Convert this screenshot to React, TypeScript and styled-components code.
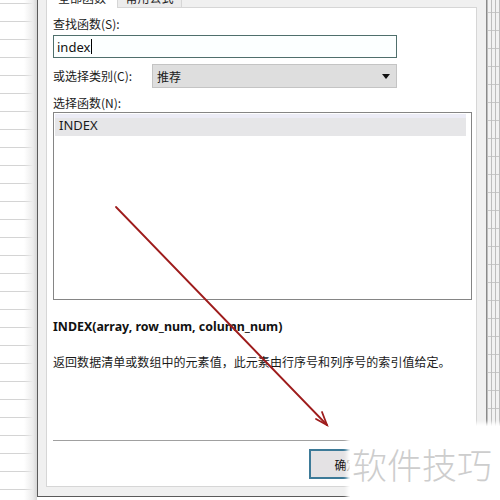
import React from "react";
import styled, { createGlobalStyle } from "styled-components";

const Global = createGlobalStyle`
  html, body { margin: 0; padding: 0; background: #fff; }
  body { font-family: "Noto Sans CJK SC", "Noto Sans", sans-serif; }
`;

const Screen = styled.div`
  position: relative;
  width: 500px;
  height: 500px;
  overflow: hidden;
  display: flex;
  background: #fff;
`;

const LeftSheet = styled.div`
  width: 37px;
  flex: none;
  background:
    linear-gradient(to right, rgba(255,255,255,0) 0, rgba(255,255,255,0) 24px, #ececec 33px, #d6d6d6 37px),
    repeating-linear-gradient(to bottom, #fff 0, #fff 3px, #d4d4d4 3px, #d4d4d4 4px, #fff 4px, #fff 18px);
`;

const RightSheet = styled.div`
  flex: 1;
  background:
    repeating-linear-gradient(to right, #bdbdbd 0, #bdbdbd 1px, transparent 1px, transparent 4px),
    repeating-linear-gradient(to bottom, #f2f2f2 0, #f2f2f2 12px, #c8c8c8 12px, #c8c8c8 13px, #f2f2f2 13px, #f2f2f2 18px);
`;

const Dialog = styled.div`
  width: 450px;
  flex: none;
  height: 511px;
  margin-top: -14px;
  box-sizing: border-box;
  background: #f0f0f0;
  border-left: 1px solid #5a5a5a;
  border-right: 1px solid #8a8a8a;
  border-bottom: 1px solid #5a5a5a;
  padding: 0 9px 9px 8px;
  display: flex;
  flex-direction: column;
`;

const TabBar = styled.div`
  display: flex;
  height: 22px;
  flex: none;
`;

const Tab = styled.div<{ $active?: boolean }>`
  box-sizing: border-box;
  width: ${(p) => (p.$active ? "72px" : "65px")};
  height: 22px;
  font-size: 12px;
  line-height: 22px;
  text-align: center;
  color: #222;
  background: ${(p) => (p.$active ? "#fff" : "#ececec")};
  border: 1px solid #d6d6d6;
  border-bottom: ${(p) => (p.$active ? "none" : "1px solid #d6d6d6")};
  margin-left: ${(p) => (p.$active ? "0" : "-1px")};
`;

const TabFill = styled.div`
  flex: 1;
  border-bottom: 1px solid #d6d6d6;
`;

const TabPage = styled.div`
  flex: 1;
  background: #fff;
  border: 1px solid #d6d6d6;
  border-top: none;
  padding: 8px 6px 0 6px;
  display: flex;
  flex-direction: column;
`;

const Label = styled.div<{ $mt?: number }>`
  font-size: 12px;
  line-height: 16px;
  color: #1a1a1a;
  margin-top: ${(p) => p.$mt ?? 0}px;
`;

const SearchInput = styled.div`
  margin-top: 3px;
  width: 344px;
  height: 23px;
  box-sizing: border-box;
  border: 1px solid #4f6f6c;
  background: #fcffff;
  font-family: "Noto Sans", sans-serif;
  font-size: 13px;
  line-height: 20px;
  padding-left: 3px;
  color: #111;
  display: flex;
  align-items: center;
`;

const Caret = styled.span`
  display: inline-block;
  width: 1px;
  height: 15px;
  background: #000;
  margin-left: 1px;
`;

const CategoryRow = styled.div`
  display: flex;
  align-items: center;
  margin-top: 6px;
  height: 24px;
`;

const CategoryLabel = styled(Label)`
  width: 99px;
`;

const Select = styled.div`
  width: 245px;
  height: 24px;
  box-sizing: border-box;
  border: 1px solid #c4c4c4;
  background: #dedede;
  display: flex;
  align-items: center;
  justify-content: space-between;
  padding: 0 6px 0 4px;
  font-size: 12px;
  color: #1a1a1a;
`;

const Arrow = styled.span`
  width: 0;
  height: 0;
  border-left: 4px solid transparent;
  border-right: 4px solid transparent;
  border-top: 5px solid #111;
`;

const ListBox = styled.div`
  margin-top: 1px;
  width: 419px;
  height: 188px;
  box-sizing: border-box;
  border: 1px solid #858585;
  padding: 1px 5px 0 1px;
  background: #fff;
`;

const ListItem = styled.div<{ $selected?: boolean }>`
  height: 22px;
  box-sizing: border-box;
  padding-left: 4px;
  font-family: "Noto Sans", sans-serif;
  font-size: 13px;
  line-height: 22px;
  color: #1a1a1a;
  background: ${(p) =>
    p.$selected
      ? "linear-gradient(to bottom, #ececf6 0, #ececf6 4px, #e6e6e8 4px, #e6e6e8 100%)"
      : "transparent"};
`;

const Signature = styled.div`
  margin-top: 18px;
  font-family: "Noto Sans", sans-serif;
  font-weight: 700;
  font-size: 12.4px;
  line-height: 18px;
  color: #111;
`;

const Description = styled.div`
  margin-top: 17px;
  font-size: 12px;
  letter-spacing: 0.05px;
  line-height: 18px;
  color: #1a1a1a;
`;

const Separator = styled.div`
  margin-top: 69px;
  height: 1px;
  background: #a0a0a0;
  box-shadow: 0 1px 0 #fff;
`;

const ButtonRow = styled.div`
  display: flex;
  gap: 8px;
  margin-top: 8px;
  padding-left: 256px;
`;

const Button = styled.div<{ $primary?: boolean }>`
  width: 75px;
  height: 30px;
  box-sizing: border-box;
  border: ${(p) => (p.$primary ? "2px solid #3d7a98" : "1px solid #adadad")};
  background: #e4e2e4;
  font-size: 12px;
  display: flex;
  align-items: center;
  justify-content: center;
  color: #111;
`;

const Overlay = styled.svg`
  position: absolute;
  left: 0;
  top: 0;
  pointer-events: none;
`;

const Watermark = styled.div`
  position: absolute;
  left: 350px;
  top: 426px;
  width: 150px;
  height: 74px;
  background: #fff;
  box-shadow: 0 0 4px 3px #fff;
  display: flex;
  align-items: center;
  padding-left: 2px;
  box-sizing: border-box;
  font-family: "Noto Sans CJK SC", sans-serif;
  font-weight: 300;
  font-size: 35px;
  color: #cdcdcd;
`;

export default function App() {
  return (
    <>
      <Global />
      <Screen>
        <LeftSheet />
        <Dialog>
          <TabBar>
            <Tab $active>全部函数</Tab>
            <Tab>常用公式</Tab>
            <TabFill />
          </TabBar>
          <TabPage>
            <Label>查找函数(S):</Label>
            <SearchInput>
              index
              <Caret />
            </SearchInput>
            <CategoryRow>
              <CategoryLabel>或选择类别(C):</CategoryLabel>
              <Select>
                <span>推荐</span>
                <Arrow />
              </Select>
            </CategoryRow>
            <Label $mt={7}>选择函数(N):</Label>
            <ListBox>
              <ListItem $selected>INDEX</ListItem>
            </ListBox>
            <Signature>INDEX(array, row_num, column_num)</Signature>
            <Description>
              返回数据清单或数组中的元素值，此元素由行序号和列序号的索引值给定。
            </Description>
            <Separator />
            <ButtonRow>
              <Button $primary>确定</Button>
            </ButtonRow>
          </TabPage>
        </Dialog>
        <RightSheet />
        <Overlay width="500" height="500" viewBox="0 0 500 500">
          <g stroke="#9e1c1c" strokeWidth="1.8" strokeLinecap="round" fill="none">
            <line x1="116" y1="207" x2="327" y2="425" />
            <polyline points="316,419 327,425 322,412" />
          </g>
        </Overlay>
        <Watermark>软件技巧</Watermark>
      </Screen>
    </>
  );
}
